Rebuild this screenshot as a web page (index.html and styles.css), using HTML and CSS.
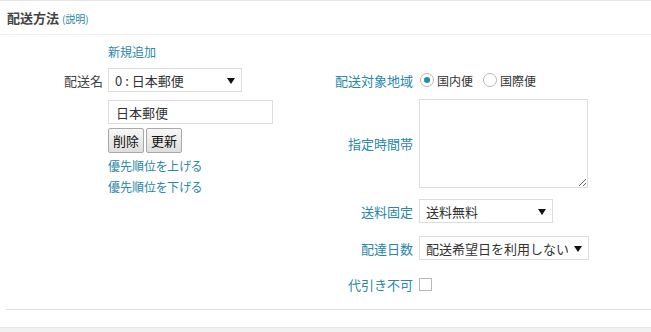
FILE: index.html
```html
<!DOCTYPE html>
<html lang="ja">
<head>
    <meta charset="UTF-8">
    <meta name="viewport" content="width=device-width, initial-scale=1.0">
    <title>配送方法</title>
    <link rel="stylesheet" href="styles.css">
</head>
<body>
    <div class="postbox">
        <h2 class="hndle">配送方法 <a href="#" class="help">(説明)</a></h2>
        <div class="inside">
            <div class="panels">
                <div class="panel panel-left">
                    <div class="row row-add">
                        <span class="label"></span>
                        <a href="#" class="link">新規追加</a>
                    </div>
                    <div class="row row-name">
                        <span class="label dark">配送名</span>
                        <div class="select-wrap w134">
                            <select class="select">
                                <option>0 : 日本郵便</option>
                            </select>
                        </div>
                    </div>
                    <div class="row row-input">
                        <span class="label"></span>
                        <input type="text" class="text-input" value="日本郵便">
                    </div>
                    <div class="row row-btns">
                        <span class="label"></span>
                        <div class="btns">
                            <button class="button">削除</button>
                            <button class="button">更新</button>
                        </div>
                    </div>
                    <div class="row row-links">
                        <span class="label"></span>
                        <div class="links">
                            <a href="#" class="link">優先順位を上げる</a>
                            <a href="#" class="link">優先順位を下げる</a>
                        </div>
                    </div>
                </div>

                <div class="panel panel-right">
                    <div class="row row-area">
                        <span class="label">配送対象地域</span>
                        <label class="radio-label"><input type="radio" name="area" class="radio" checked>国内便</label>
                        <label class="radio-label"><input type="radio" name="area" class="radio">国際便</label>
                    </div>
                    <div class="row row-time">
                        <span class="label">指定時間帯</span>
                        <textarea class="textarea"></textarea>
                    </div>
                    <div class="row row-fee">
                        <span class="label">送料固定</span>
                        <div class="select-wrap w134">
                            <select class="select">
                                <option>送料無料</option>
                            </select>
                        </div>
                    </div>
                    <div class="row row-days">
                        <span class="label">配達日数</span>
                        <div class="select-wrap w170">
                            <select class="select">
                                <option>配送希望日を利用しない</option>
                            </select>
                        </div>
                    </div>
                    <div class="row row-cod">
                        <span class="label">代引き不可</span>
                        <input type="checkbox" class="checkbox">
                    </div>
                </div>
            </div>
        </div>
    </div>
    <div class="next-box"></div>
</body>
</html>
```

FILE: styles.css
```css
html, body {
    margin: 0;
    padding: 0;
    background: #fff;
    overflow: hidden;
}
body {
    font-family: "Noto Sans CJK JP", "Noto Sans", sans-serif;
    font-size: 13px;
    color: #333;
}
a {
    text-decoration: none;
}
.postbox {
    border-top: 1px solid #e5e5e5;
}
.hndle {
    margin: 0;
    height: 33px;
    line-height: 33px;
    padding-left: 7px;
    font-size: 13px;
    font-weight: bold;
    color: #444;
    border-bottom: 1px solid #eee;
}
.hndle .help {
    font-size: 10px;
    font-weight: normal;
    color: #2a87a8;
}
.inside {
    padding-left: 6px;
}
.panels {
    display: flex;
    height: 275px;
    border-bottom: 1px solid #ddd;
    box-sizing: border-box;
}
.panel-left {
    width: 314px;
    padding-top: 6px;
}
.panel-right {
    padding-top: 33px;
}
.row {
    display: flex;
    align-items: center;
}
.label {
    flex: none;
    text-align: right;
    color: #2a87a8;
    white-space: nowrap;
}
.label.dark {
    color: #444;
}
.panel-left .label {
    width: 97px;
    margin-right: 5px;
}
.panel-right .label {
    width: 93px;
    margin-right: 6px;
}
.link {
    color: #2a87a8;
    font-size: 12px;
    line-height: 21px;
    font-feature-settings: "palt";
}
.row-add {
    height: 20px;
}
.row-name {
    margin-top: 7px;
}
.row-input {
    margin-top: 8px;
}
.row-btns {
    margin-top: 4px;
}
.row-links {
    margin-top: 2px;
}
.links {
    display: flex;
    flex-direction: column;
}

/* selects */
.select-wrap {
    position: relative;
    height: 24px;
}
.select-wrap.w134 {
    width: 134px;
}
.select-wrap.w170 {
    width: 170px;
}
.select-wrap::after {
    content: "";
    position: absolute;
    right: 7px;
    top: 10px;
    border-left: 4px solid transparent;
    border-right: 4px solid transparent;
    border-top: 6px solid #111;
    pointer-events: none;
}
.select {
    appearance: none;
    -webkit-appearance: none;
    width: 100%;
    height: 24px;
    box-sizing: border-box;
    border: 1px solid #ddd;
    background: #fff;
    color: #333;
    font-family: inherit;
    font-size: 13px;
    padding: 0 20px 0 6px;
    margin: 0;
    border-radius: 0;
}
.text-input {
    width: 165px;
    height: 24px;
    box-sizing: border-box;
    border: 1px solid #ddd;
    font-family: inherit;
    font-size: 13px;
    color: #333;
    padding: 0 7px;
    margin: 0;
}
.btns {
    display: flex;
    gap: 2px;
}
.button {
    width: 36px;
    height: 25px;
    padding: 0;
    margin: 0;
    font-family: inherit;
    font-size: 13px;
    color: #111;
    border: 1px solid #a9a9a9;
    border-radius: 2px;
    background: linear-gradient(#f7f7f7, #dedede);
    cursor: pointer;
}

/* right side */
.row-area {
    height: 24px;
}
.radio-label {
    display: flex;
    align-items: center;
    font-size: 12px;
    color: #333;
    margin-right: 10px;
}
.radio {
    appearance: none;
    -webkit-appearance: none;
    width: 14px;
    height: 14px;
    margin: 0 3px 0 1px;
    border: 1px solid #b4b9be;
    border-radius: 50%;
    box-sizing: border-box;
    background: #fff;
    position: relative;
}
.radio-label + .radio-label .radio {
    margin-left: 0;
}
.radio:checked::before {
    content: "";
    position: absolute;
    left: 3px;
    top: 3px;
    width: 6px;
    height: 6px;
    border-radius: 50%;
    background: #1e8cbe;
}
.row-time {
    margin-top: 7px;
}
.textarea {
    width: 169px;
    height: 89px;
    box-sizing: border-box;
    border: 1px solid #ddd;
    margin: 0;
    font-family: inherit;
}
.row-fee {
    margin-top: 11px;
}
.row-days {
    margin-top: 13px;
}
.row-cod {
    margin-top: 12px;
    height: 24px;
}
.checkbox {
    appearance: none;
    -webkit-appearance: none;
    width: 13px;
    height: 13px;
    margin: 0;
    border: 1px solid #b4b9be;
    box-sizing: border-box;
    background: #fff;
}
.next-box {
    margin-top: 17px;
    height: 20px;
    border-top: 1px solid #e5e5e5;
    background: #f1f1f1;
}
```
